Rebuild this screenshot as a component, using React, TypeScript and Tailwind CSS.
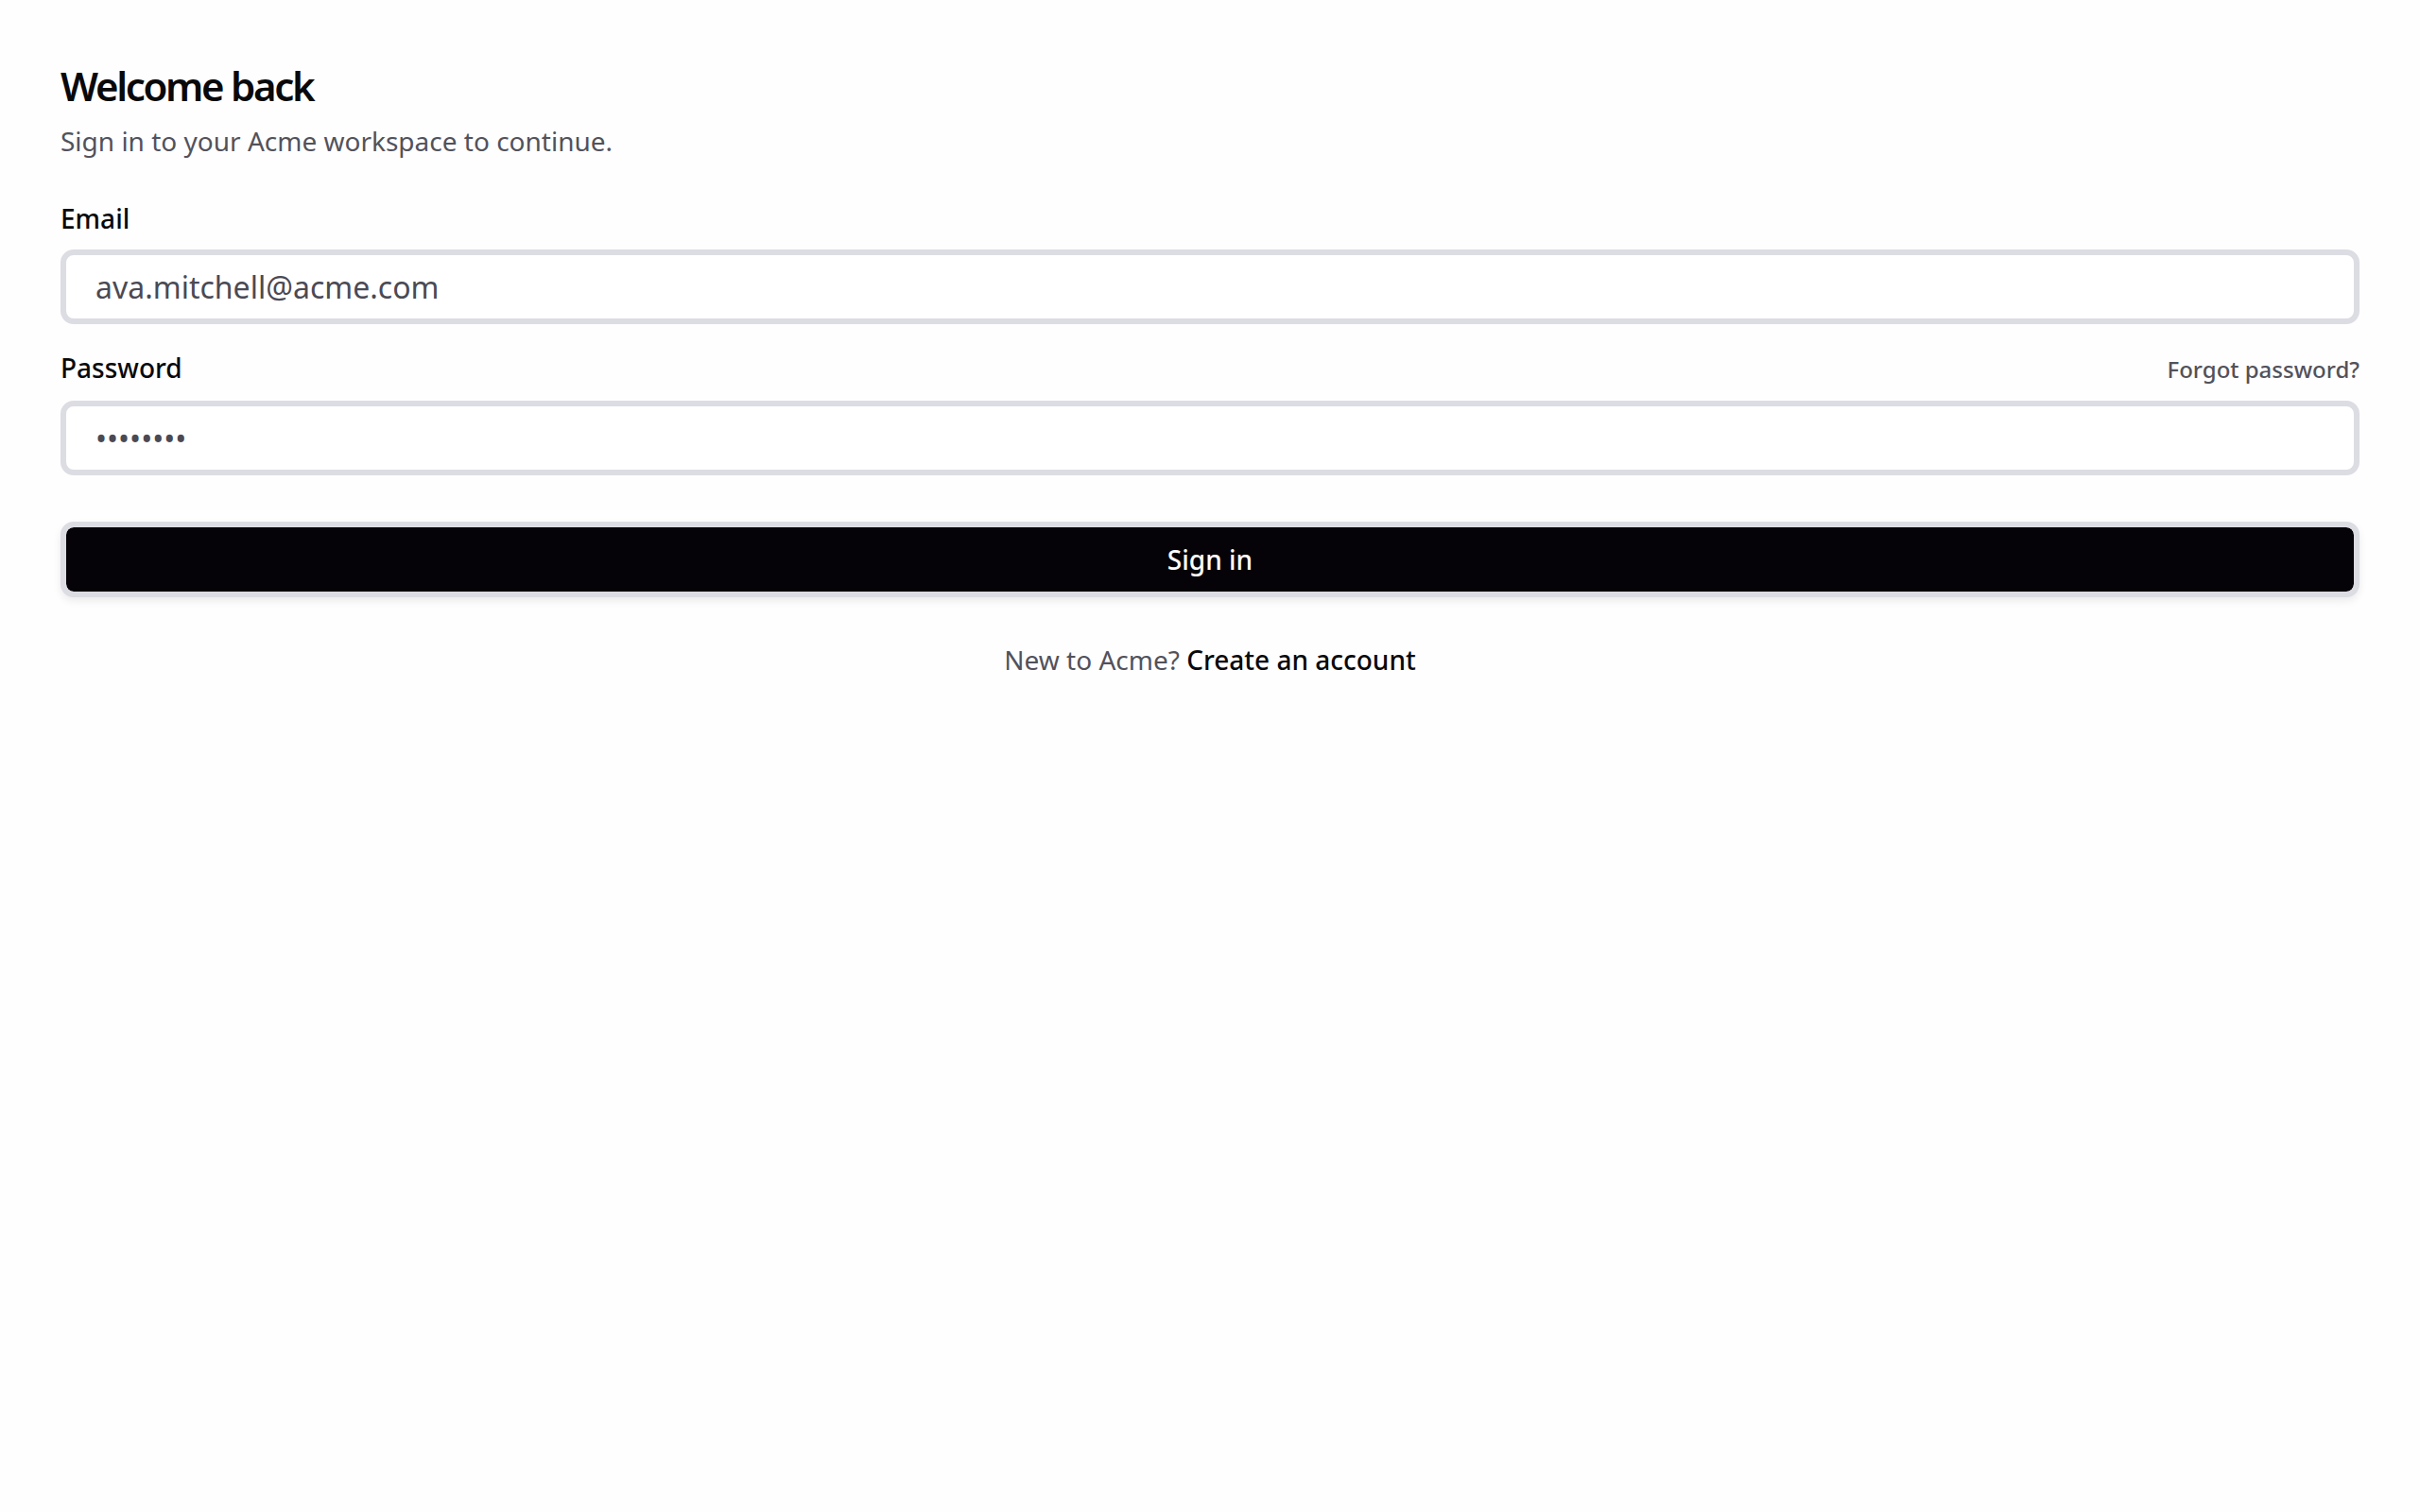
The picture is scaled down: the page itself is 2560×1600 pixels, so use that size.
const App = () => (
  <div className="min-h-screen bg-[#fefeff] px-16 pt-16 font-['Noto_Sans',sans-serif] text-[#09090b]">
    <h1 className="text-[42px] leading-[54px] font-semibold tracking-[-0.055em]">Welcome back</h1>
    <p className="mt-[10px] text-[28px] leading-[42px] text-[#52525b]">
      Sign in to your Acme workspace to continue.
    </p>

    <form className="mt-[40px]" onSubmit={(e) => e.preventDefault()}>
      <label htmlFor="email" className="block text-[28px] leading-[42px] font-medium">
        Email
      </label>
      <input
        id="email"
        type="email"
        defaultValue="ava.mitchell@acme.com"
        className="mt-[12px] block h-[79px] w-full rounded-[14px] border-[6px] border-[#dcdce3] bg-white px-[31px] text-[32px] text-[#4a4a54] outline-none"
      />

      <div className="mt-[25px] flex items-baseline justify-between">
        <label htmlFor="password" className="text-[28px] leading-[42px] font-medium">
          Password
        </label>
        <a href="#" className="text-[24px] font-medium text-[#52525b] no-underline">
          Forgot password?
        </a>
      </div>
      <input
        id="password"
        type="password"
        defaultValue="password"
        className="mt-[14px] block h-[79px] w-full rounded-[14px] border-[6px] border-[#dcdce3] bg-white px-[31px] text-[32px] text-[#4a4a54] outline-none"
      />

      <button
        type="submit"
        className="mt-[49px] block h-[80px] w-full rounded-[14px] border-[6px] border-[#dcdce3] bg-[#050307] bg-clip-padding text-[28px] font-medium text-white shadow-[0_4px_8px_rgba(0,0,0,0.08)]"
      >
        Sign in
      </button>
    </form>

    <p className="mt-[45px] text-center text-[28px] leading-[42px] text-[#52525b]">
      New to Acme?{' '}
      <a href="#" className="font-medium text-[#09090b] no-underline">
        Create an account
      </a>
    </p>
  </div>
);

export default App;
